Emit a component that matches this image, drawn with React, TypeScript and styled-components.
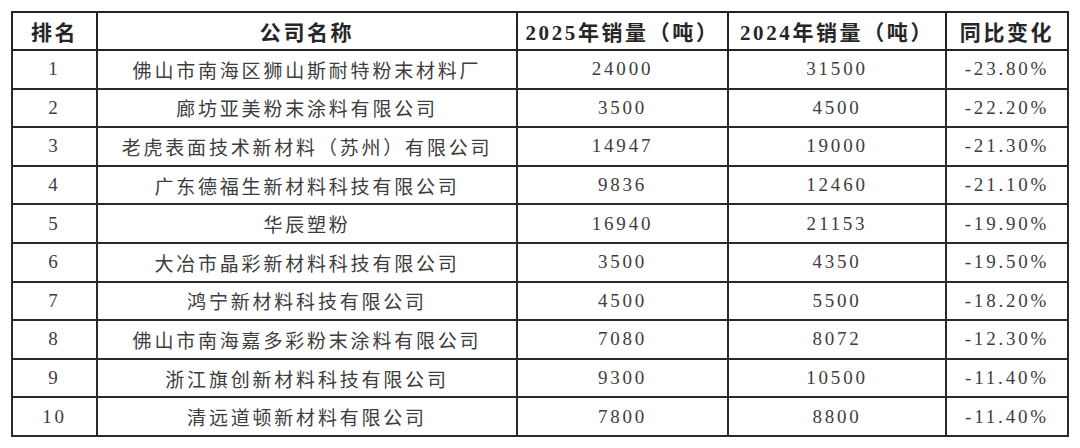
import styled, { createGlobalStyle } from "styled-components";

const GlobalStyle = createGlobalStyle`
  html, body {
    margin: 0;
    background: #ffffff;
  }
  body {
    font-family: "Liberation Serif", "Noto Sans CJK SC", serif;
  }
`;

const Page = styled.div`
  padding: 11px 0 0 11px;
`;

const Table = styled.table`
  border-collapse: collapse;
  table-layout: fixed;
  width: 1057px;
  border: 2px solid #222222;
`;

const Col = styled.col<{ $w: number }>`
  width: ${(p) => p.$w}px;
`;

const HeadCell = styled.th`
  height: 36px;
  padding: 0;
  border: 2px solid #222222;
  font-size: 21px;
  font-weight: 700;
  color: #262626;
  letter-spacing: 2.6px;
  text-align: center;
  vertical-align: middle;
  white-space: nowrap;
`;

const Cell = styled.td`
  height: 36.6px;
  padding: 0;
  border: 2px solid #2a2a2a;
  font-size: 19px;
  color: #3d3d3d;
  letter-spacing: 2.8px;
  text-align: center;
  vertical-align: middle;
  white-space: nowrap;
`;

const rows = [
  ["1", "佛山市南海区狮山斯耐特粉末材料厂", "24000", "31500", "-23.80%"],
  ["2", "廊坊亚美粉末涂料有限公司", "3500", "4500", "-22.20%"],
  ["3", "老虎表面技术新材料（苏州）有限公司", "14947", "19000", "-21.30%"],
  ["4", "广东德福生新材料科技有限公司", "9836", "12460", "-21.10%"],
  ["5", "华辰塑粉", "16940", "21153", "-19.90%"],
  ["6", "大冶市晶彩新材料科技有限公司", "3500", "4350", "-19.50%"],
  ["7", "鸿宁新材料科技有限公司", "4500", "5500", "-18.20%"],
  ["8", "佛山市南海嘉多彩粉末涂料有限公司", "7080", "8072", "-12.30%"],
  ["9", "浙江旗创新材料科技有限公司", "9300", "10500", "-11.40%"],
  ["10", "清远道顿新材料有限公司", "7800", "8800", "-11.40%"],
];

const headers = ["排名", "公司名称", "2025年销量（吨）", "2024年销量（吨）", "同比变化"];

export default function App() {
  return (
    <Page>
      <GlobalStyle />
      <Table>
        <colgroup>
          <Col $w={85} />
          <Col $w={420} />
          <Col $w={211} />
          <Col $w={218} />
          <Col $w={122} />
        </colgroup>
        <thead>
          <tr>
            {headers.map((h) => (
              <HeadCell key={h}>{h}</HeadCell>
            ))}
          </tr>
        </thead>
        <tbody>
          {rows.map((r) => (
            <tr key={r[0]}>
              {r.map((c, i) => (
                <Cell key={i}>{c}</Cell>
              ))}
            </tr>
          ))}
        </tbody>
      </Table>
    </Page>
  );
}
